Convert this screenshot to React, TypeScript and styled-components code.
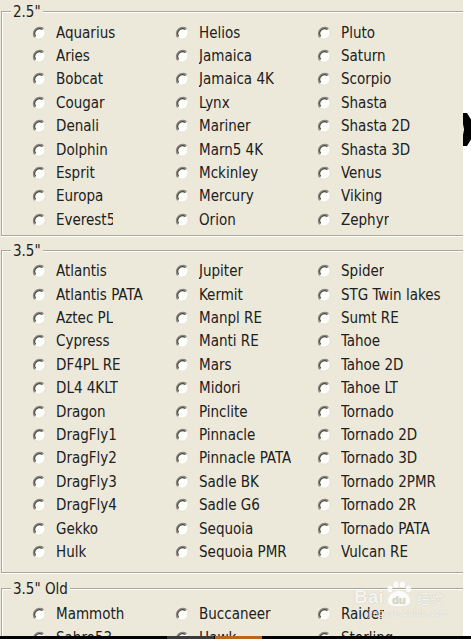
import React from 'react';
import styled, { createGlobalStyle } from 'styled-components';

const Global = createGlobalStyle`
  html, body { margin: 0; padding: 0; background: #ffffff; }
  body {
    width: 471px; height: 639px; overflow: hidden;
    font-family: "DejaVu Sans Condensed", "DejaVu Sans", sans-serif;
    font-stretch: condensed;
  }
`;

const Screen = styled.div`
  width: 471px;
  height: 639px;
  display: flex;
  flex-direction: column;
  overflow: hidden;
  background: #ffffff;
`;

const Top = styled.div`
  display: flex;
  height: 636px;
`;

const Panel = styled.div`
  position: relative;
  width: 463px;
  height: 636px;
  box-sizing: border-box;
  padding: 11px 0 0 1px;
  background: #ece9da;
  overflow: hidden;
  display: flex;
  flex-direction: column;
`;

const Side = styled.div`
  position: relative;
  flex: 1;
  background: #ffffff;
  overflow: hidden;
`;

const Chevron = styled.svg`
  position: absolute;
  left: 0;
  top: 113px;
`;

const Taskbar = styled.div`
  height: 3px;
  background: #000000;
  display: flex;
  padding-left: 167px;
`;

const TaskItem = styled.div<{ $c: string }>`
  width: 47px;
  height: 100%;
  margin-right: 1px;
  background: ${(p) => p.$c};
`;

const Group = styled.section<{ $mt: number; $pb: number }>`
  flex: none;
  width: 500px;
  margin-top: ${(p) => p.$mt}px;
  padding-bottom: ${(p) => p.$pb}px;
  display: flex;
  flex-direction: column;
  border: 1px solid #aca899;
  box-shadow: inset 1px 1px 0 #ffffff, 0 1px 0 #ffffff;
`;

const Title = styled.h2`
  align-self: flex-start;
  margin: -9px 0 0 9px;
  padding: 0 2px;
  background: #ece9da;
  font-size: 15px;
  line-height: 18px;
  font-weight: normal;
  color: #202020;
`;

const Options = styled.div<{ $rows: number; $pt: number }>`
  display: grid;
  grid-auto-flow: column;
  grid-template-rows: repeat(${(p) => p.$rows}, 23.4px);
  grid-template-columns: 143px 142px 140px;
  padding: ${(p) => p.$pt}px 0 0 30px;
`;

const Option = styled.label`
  display: flex;
  align-items: center;
  gap: 10px;
  font-size: 15px;
  color: #202020;
  white-space: nowrap;
`;

const RadioMark = styled.svg`
  flex: none;
  display: block;
  width: 14px;
  height: 14px;
`;

const Label = styled.span<{ $clip?: number }>`
  display: block;
  overflow: hidden;
  ${(p) => (p.$clip ? `max-width: ${p.$clip}px;` : '')}
`;

const Watermark = styled.div`
  position: absolute;
  left: 354px;
  top: 581px;
  display: flex;
  flex-direction: column;
  color: rgba(255, 255, 255, 0.85);
  text-shadow: 0 0 1px rgba(110, 110, 100, 0.4);
  pointer-events: none;
`;

const MarkRow = styled.div`
  display: flex;
  align-items: flex-end;
`;

const Bai = styled.span`
  font-family: "Liberation Sans", Arial, sans-serif;
  font-weight: bold;
  font-size: 19px;
  line-height: 20px;
`;

const Jingyan = styled.span`
  margin-left: 3px;
  font-family: "Noto Sans CJK SC", sans-serif;
  font-size: 13px;
  line-height: 18px;
`;

const Url = styled.span`
  margin: 1px 0 0 14px;
  font-family: "DejaVu Sans", sans-serif;
  font-size: 9px;
  line-height: 11px;
  letter-spacing: 0.3px;
`;

const Radio = () => (
  <RadioMark viewBox="0 0 14 14">
    <circle cx="7" cy="7" r="6.2" fill="#fdfdfa" />
    <path d="M11.6 2.9 A6.2 6.2 0 0 0 2.9 11.6" stroke="#8c8a80" strokeWidth="1.6" fill="none" />
    <path d="M10.4 3.6 A4.9 4.9 0 0 0 3.6 10.4" stroke="#3f3e3a" strokeWidth="1.1" fill="none" />
    <path d="M2.6 11.4 A6.2 6.2 0 0 0 11.4 2.6" stroke="#e4e1d4" strokeWidth="1" fill="none" />
  </RadioMark>
);

type Item = string | { t: string; clip: number };

const groups: { title: string; rows: number; mt: number; pb: number; pt: number; items: Item[] }[] = [
  {
    title: '2.5"',
    rows: 9,
    mt: 0,
    pb: 3,
    pt: 0,
    items: [
      'Aquarius', 'Aries', 'Bobcat', 'Cougar', 'Denali', 'Dolphin', 'Esprit', 'Europa', { t: 'Everest5', clip: 57 },
      'Helios', 'Jamaica', 'Jamaica 4K', 'Lynx', 'Mariner', 'Marn5 4K', 'Mckinley', 'Mercury', 'Orion',
      'Pluto', 'Saturn', 'Scorpio', 'Shasta', 'Shasta 2D', 'Shasta 3D', 'Venus', 'Viking', 'Zephyr',
    ],
  },
  {
    title: '3.5"',
    rows: 13,
    mt: 14,
    pb: 8,
    pt: 0,
    items: [
      'Atlantis', 'Atlantis PATA', 'Aztec PL', 'Cypress', 'DF4PL RE', 'DL4 4KLT', 'Dragon', 'DragFly1', 'DragFly2', 'DragFly3', 'DragFly4', 'Gekko', 'Hulk',
      'Jupiter', 'Kermit', 'Manpl RE', 'Manti RE', 'Mars', 'Midori', 'Pinclite', 'Pinnacle', 'Pinnacle PATA', 'Sadle BK', 'Sadle G6', 'Sequoia', 'Sequoia PMR',
      'Spider', 'STG Twin lakes', 'Sumt RE', 'Tahoe', 'Tahoe 2D', 'Tahoe LT', 'Tornado', 'Tornado 2D', 'Tornado 3D', 'Tornado 2PMR', 'Tornado 2R', 'Tornado PATA', 'Vulcan RE',
    ],
  },
  {
    title: '3.5" Old',
    rows: 2,
    mt: 15,
    pb: 8,
    pt: 5,
    items: ['Mammoth', 'Sabre53', 'Buccaneer', 'Hawk', 'Raider', 'Sterling'],
  },
];

export default function App() {
  return (
    <Screen>
      <Global />
      <Top>
        <Panel>
          {groups.map((g) => (
            <Group key={g.title} $mt={g.mt} $pb={g.pb}>
              <Title>{g.title}</Title>
              <Options $rows={g.rows} $pt={g.pt}>
                {g.items.map((it) => {
                  const t = typeof it === 'string' ? it : it.t;
                  const clip = typeof it === 'string' ? undefined : it.clip;
                  return (
                    <Option key={t}>
                      <Radio />
                      <Label $clip={clip}>{t}</Label>
                    </Option>
                  );
                })}
              </Options>
            </Group>
          ))}
          <Watermark>
            <MarkRow>
              <Bai>Bai</Bai>
              <svg width="30" height="26" viewBox="0 0 30 26">
                <ellipse cx="6" cy="8" rx="2.6" ry="3.2" fill="rgba(255,255,255,0.85)" />
                <ellipse cx="12" cy="3.6" rx="2.6" ry="3.2" fill="rgba(255,255,255,0.85)" />
                <ellipse cx="18.5" cy="3.6" rx="2.6" ry="3.2" fill="rgba(255,255,255,0.85)" />
                <ellipse cx="24.5" cy="8" rx="2.6" ry="3.2" fill="rgba(255,255,255,0.85)" />
                <path d="M15 10 C8 10 4 16 4 20 C4 24 8 25 15 25 C22 25 26 24 26 20 C26 16 22 10 15 10 Z" fill="rgba(255,255,255,0.85)" />
                <text x="15" y="23" textAnchor="middle" fontFamily="Liberation Sans, sans-serif" fontWeight="bold" fontSize="11" fill="#d9d6c8">du</text>
              </svg>
              <Jingyan>经验</Jingyan>
            </MarkRow>
            <Url>jingyan.baidu.com</Url>
          </Watermark>
        </Panel>
        <Side>
          <Chevron width="8" height="33" viewBox="0 0 8 33">
            <polygon points="-2,0 4,0 14,16.5 4,33 -2,33 1,16.5" fill="#000" />
          </Chevron>
        </Side>
      </Top>
      <Taskbar>
        <TaskItem $c="#3a3a3a" />
        <TaskItem $c="#b8651f" />
      </Taskbar>
    </Screen>
  );
}
